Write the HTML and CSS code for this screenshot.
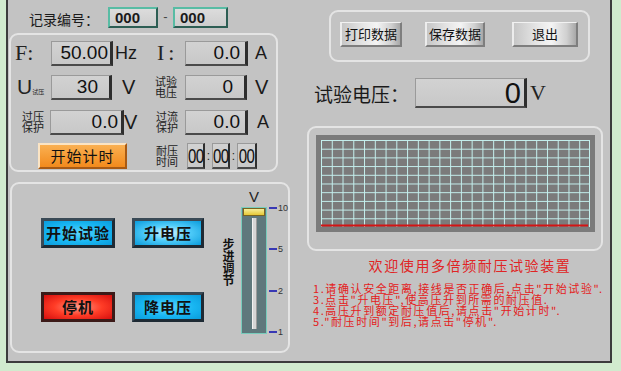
FILE: index.html
```html
<!DOCTYPE html>
<html>
    <head>
        <title>多倍频耐压试验装置</title>
        <meta charset="UTF-8">
        <link rel="stylesheet" href="styles.css">
    </head>
    <body>
        <div class="screen">
            <div class="left">
                <!-- Номер записи -->
                <div class="record">
                    <span class="record-label">记录编号：</span>
                    <span class="record-box record-box-1">000</span>
                    <span class="record-dash">-</span>
                    <span class="record-box record-box-2">000</span>
                </div>

                <!-- Измеряемые величины -->
                <div class="group group-meter">
                    <div class="row row-1">
                        <span class="sym sym-f">F:</span>
                        <span class="disp disp-f">50.00</span>
                        <span class="unit unit-hz">Hz</span>
                        <span class="sym sym-i">I:</span>
                        <span class="disp disp-i">0.0</span>
                        <span class="unit unit-a">A</span>
                    </div>
                    <div class="row row-2">
                        <span class="sym sym-u">U<small>试压</small></span>
                        <span class="disp disp-u">30</span>
                        <span class="unit unit-v1">V</span>
                        <span class="lbl lbl-2">试验<br>电压</span>
                        <span class="disp disp-tv">0</span>
                        <span class="unit unit-v2">V</span>
                    </div>
                    <div class="row row-3">
                        <span class="lbl lbl-ov">过压<br>保护</span>
                        <span class="disp disp-ov">0.0</span>
                        <span class="unit unit-v3">V</span>
                        <span class="lbl lbl-oc">过流<br>保护</span>
                        <span class="disp disp-oc">0.0</span>
                        <span class="unit unit-a2">A</span>
                    </div>
                    <div class="row row-4">
                        <button class="btn-orange">开始计时</button>
                        <span class="lbl lbl-time">耐压<br>时间</span>
                        <span class="disp disp-time t1"><span>00</span></span>
                        <span class="colon">:</span>
                        <span class="disp disp-time t2"><span>00</span></span>
                        <span class="colon">:</span>
                        <span class="disp disp-time t3"><span>00</span></span>
                    </div>
                </div>

                <!-- Управление -->
                <div class="group group-control">
                    <div class="ctrl-buttons">
                        <button class="btn-blue">开始试验</button>
                        <button class="btn-blue btn-glow">升电压</button>
                        <button class="btn-red">停机</button>
                        <button class="btn-blue">降电压</button>
                    </div>
                    <div class="vlabel">步进调节</div>
                    <div class="stepper">
                        <div class="stepper-v">V</div>
                        <div class="stepper-body">
                            <div class="slider">
                                <div class="slider-knob"></div>
                                <div class="slider-track"></div>
                            </div>
                            <div class="scale">
                                <span><i></i>10</span>
                                <span><i></i>5</span>
                                <span><i></i>2</span>
                                <span><i></i>1</span>
                            </div>
                        </div>
                    </div>
                </div>
            </div>

            <div class="right">
                <div class="group group-actions">
                    <button class="btn-gray btn-print">打印数据</button>
                    <button class="btn-gray btn-save">保存数据</button>
                    <button class="btn-gray btn-exit">退出</button>
                </div>

                <div class="volt-row">
                    <span class="volt-label">试验电压：</span>
                    <span class="disp disp-volt">0</span>
                    <span class="volt-unit">V</span>
                </div>

                <div class="group group-chart">
                    <div class="chart">
                        <svg width="269" height="87" viewBox="0 0 269 87">
                            <defs>
                                <pattern id="grid" width="10.76" height="8.7" patternUnits="userSpaceOnUse">
                                    <path d="M0.5 0 V8.7 M0 0.5 H10.76" stroke="#c4f0ee" stroke-width="1" fill="none"/>
                                </pattern>
                            </defs>
                            <rect x="0" y="0" width="269" height="87" fill="url(#grid)"/>
                            <path d="M268.5 0 V87" stroke="#c4f0ee" stroke-width="1"/>
                            <path d="M0 85.5 H267" stroke="#d41414" stroke-width="2"/>
                        </svg>
                    </div>
                </div>

                <div class="welcome">欢迎使用多倍频耐压试验装置</div>
                <div class="notes">
                    1.请确认安全距离,接线是否正确后,点击"开始试验".<br>
                    3.点击"升电压",使高压升到所需的耐压值.<br>
                    4.高压升到额定耐压值后,请点击"开始计时".<br>
                    5."耐压时间"到后,请点击"停机".
                </div>
            </div>
        </div>
    </body>
</html>
```

FILE: styles.css
```css
* {
    box-sizing: border-box;
}

body {
    margin: 0;
    background: #d1ebce;
    font-family: "Noto Sans CJK SC", sans-serif;
    color: #1a1a1a;
}

button {
    font-family: "Noto Sans CJK SC", sans-serif;
    padding: 0;
    cursor: pointer;
    color: #111;
}

.screen {
    display: flex;
    margin-left: 6px;
    width: 606px;
    height: 363px;
    background: #c3c3c3;
    border-left: 2px solid #3c3c3c;
    border-right: 2px solid #3c3c3c;
    border-bottom: 2px solid #3c3c3c;
}

.left {
    width: 284px;
    flex: none;
}

.right {
    flex: 1;
}

.group {
    border: 2px solid #e4e4e4;
    border-radius: 9px;
}

/* record number */
.record {
    display: flex;
    align-items: flex-start;
    height: 33px;
    padding-left: 21px;
}

.record-label {
    width: 79px;
    margin-top: 9px;
    font-size: 14px;
    line-height: 20px;
}

.record-box {
    height: 21px;
    margin-top: 7px;
    padding-left: 5px;
    background: linear-gradient(#dcdcdc, #cdcdcd);
    border-left: 2px solid #58bca4;
    border-top: 2px solid #58bca4;
    border-right: 2px solid #2d5e54;
    border-bottom: 2px solid #2d5e54;
    font-family: "Liberation Sans", sans-serif;
    font-weight: bold;
    font-size: 15px;
    line-height: 17px;
}

.record-box-1 {
    width: 50px;
}

.record-box-2 {
    width: 55px;
}

.record-dash {
    width: 15px;
    margin-top: 9px;
    text-align: center;
    font-family: "Liberation Sans", sans-serif;
    font-size: 13px;
    color: #444;
}

/* meter group */
.group-meter {
    width: 269px;
    height: 139px;
    margin-left: 1px;
    padding-top: 5px;
}

.row {
    display: flex;
    align-items: center;
    height: 26px;
}

.row-2,
.row-4 {
    margin-top: 8px;
}

.row-3 {
    margin-top: 9px;
}

.sym {
    font-family: "Liberation Serif", serif;
    font-size: 22px;
    line-height: 26px;
    color: #222;
}

.sym-f {
    width: 40px;
    padding-left: 4px;
}

.sym-i {
    width: 30px;
    padding-left: 2px;
    letter-spacing: 4px;
}

.sym-u {
    width: 40px;
    padding-left: 6px;
    font-family: "Liberation Sans", sans-serif;
    font-size: 21px;
}

.sym-u small {
    font-family: "Noto Sans CJK SC", sans-serif;
    font-size: 6px;
    line-height: 6px;
}

.disp {
    height: 25px;
    background: linear-gradient(#d2d2d2, #c8c8c8);
    border-top: 1px solid #9a9a9a;
    border-left: 1px solid #9a9a9a;
    border-right: 3px solid #2e2e2e;
    border-bottom: 2px solid #4a4a4a;
    text-align: right;
    font-family: "Liberation Sans", sans-serif;
    font-size: 19px;
    line-height: 22px;
    color: #111;
}

.disp-f {
    width: 62px;
    padding-right: 2px;
}

.disp-i {
    width: 63px;
    padding-right: 5px;
}

.disp-u {
    width: 61px;
    padding-right: 11px;
}

.disp-tv {
    width: 62px;
    padding-right: 11px;
}

.disp-ov {
    width: 74px;
    padding-right: 3px;
}

.disp-oc {
    width: 63px;
    padding-right: 5px;
}

.unit {
    font-family: "Liberation Sans", sans-serif;
    font-size: 20px;
    color: #1a1a1a;
}

.unit-hz {
    width: 42px;
    padding-left: 2px;
    font-size: 18px;
}

.unit-a {
    padding-left: 7px;
    font-size: 18px;
}

.unit-v1 {
    width: 43px;
    padding-left: 10px;
}

.unit-v2 {
    padding-left: 8px;
}

.unit-v3 {
    width: 31px;
}

.unit-a2 {
    padding-left: 9px;
    font-size: 18px;
}

.lbl {
    font-size: 11px;
    line-height: 11px;
    color: #222;
}

.lbl-2 {
    width: 30px;
}

.lbl-ov {
    width: 39px;
    padding-left: 11px;
}

.lbl-oc {
    width: 30px;
    padding-left: 1px;
}

.lbl-time {
    width: 31px;
    margin-left: 29px;
}

.btn-orange {
    width: 89px;
    height: 26px;
    margin-left: 27px;
    background: linear-gradient(#fab052, #f28a1c);
    border-top: 2px solid #fbe4c4;
    border-left: 2px solid #fbe4c4;
    border-right: 2px solid #a85a14;
    border-bottom: 2px solid #a85a14;
    font-size: 15px;
    letter-spacing: 1px;
    line-height: 20px;
}

.disp-time {
    height: 26px;
    padding: 0;
    text-align: center;
    border-right-width: 2px;
    font-size: 15px;
    letter-spacing: -0.5px;
    line-height: 23px;
}

.disp-time span {
    display: inline-block;
    transform: scaleY(1.3);
}

.t1,
.t2 {
    width: 18px;
}

.t3 {
    width: 20px;
}

.colon {
    width: 7px;
    text-align: center;
    font-family: "Liberation Sans", sans-serif;
    font-size: 12px;
    color: #222;
}

/* control group */
.group-control {
    display: flex;
    align-items: flex-start;
    width: 280px;
    height: 171px;
    margin-top: 10px;
    margin-left: 2px;
}

.ctrl-buttons {
    display: grid;
    grid-template-columns: 74px 72px;
    grid-template-rows: 30px 30px;
    column-gap: 17px;
    row-gap: 44px;
    margin-top: 34px;
    margin-left: 29px;
}

.btn-blue,
.btn-red {
    border: 3px solid #1e2a34;
    border-top-color: #3a4a56;
    border-left-color: #3a4a56;
    font-size: 15px;
    font-weight: bold;
    letter-spacing: 1px;
    line-height: 20px;
}

.btn-blue {
    background: radial-gradient(ellipse at center, #58d4fc 0%, #18b6f2 55%, #0a9cdc 100%);
}

.btn-glow {
    background: radial-gradient(ellipse at center, #d8f6ff 0%, #52cdfa 45%, #0a9cdc 100%);
}

.btn-red {
    background: radial-gradient(ellipse at center, #ff9a88 0%, #ff3c26 50%, #d60e0e 100%);
    border-color: #3c1a18;
}

.vlabel {
    width: 12px;
    margin-top: 54px;
    margin-left: 18px;
    writing-mode: vertical-rl;
    font-size: 12px;
    font-weight: bold;
    line-height: 12px;
    color: #111;
}

.stepper {
    margin-top: 4px;
    margin-left: 7px;
}

.stepper-v {
    width: 26px;
    text-align: center;
    font-family: "Liberation Sans", sans-serif;
    font-size: 15px;
    line-height: 17px;
    color: #222;
}

.stepper-body {
    display: flex;
    align-items: flex-start;
    margin-top: 2px;
}

.slider {
    display: flex;
    flex-direction: column;
    align-items: center;
    width: 26px;
    height: 127px;
    padding: 0 1px;
    background: #5f787c;
    border: 1px solid #78ccbc;
}

.slider-knob {
    width: 100%;
    height: 8px;
    background: linear-gradient(#f6ee9a, #e6c836);
    border: 1px solid #7a6420;
}

.slider-track {
    width: 5px;
    height: 111px;
    margin-top: 2px;
    background: #d6d6d6;
    border-left: 1px solid #f2f2f2;
    border-right: 1px solid #9c9c9c;
}

.scale {
    display: flex;
    flex-direction: column;
    justify-content: space-between;
    height: 136px;
    margin-top: -5px;
    margin-left: 2px;
}

.scale span {
    display: flex;
    align-items: center;
    height: 12px;
    font-family: "Liberation Sans", sans-serif;
    font-size: 9px;
    color: #333;
}

.scale i {
    width: 8px;
    height: 2px;
    margin-right: 1px;
    background: #3838b4;
}

/* right side */
.group-actions {
    display: flex;
    width: 261px;
    height: 52px;
    margin-top: 10px;
    margin-left: 37px;
    padding-top: 10px;
    padding-left: 9px;
}

.btn-gray {
    height: 25px;
    background: linear-gradient(to right, #c6c6c6 0%, #e4e4e4 35%, #f4f4f4 60%, #d0d0d0 85%, #a8a8a8 100%);
    border-top: 1px solid #f2f2f2;
    border-left: 2px solid #ececec;
    border-right: 2px solid #7e7e7e;
    border-bottom: 2px solid #7e7e7e;
    font-size: 13px;
    line-height: 18px;
}

.btn-print {
    width: 62px;
}

.btn-save {
    width: 60px;
    margin-left: 23px;
}

.btn-exit {
    width: 66px;
    margin-left: 27px;
}

.volt-row {
    display: flex;
    align-items: center;
    height: 30px;
    margin-top: 16px;
    margin-left: 22px;
}

.volt-label {
    width: 101px;
    font-size: 19px;
    color: #1a1a1a;
}

.disp-volt {
    width: 112px;
    height: 30px;
    padding-right: 3px;
    font-size: 29px;
    line-height: 28px;
}

.volt-unit {
    margin-left: 3px;
    font-family: "Liberation Serif", serif;
    font-size: 22px;
    color: #222;
}

.group-chart {
    width: 296px;
    height: 125px;
    margin-top: 18px;
    margin-left: 15px;
    padding-top: 7px;
    padding-left: 7px;
}

.chart {
    width: 279px;
    height: 97px;
    padding: 5px;
    background: #7b7b7b;
}

.chart svg {
    display: block;
}

.welcome {
    margin-top: 6px;
    padding-left: 38px;
    text-align: center;
    font-size: 14px;
    line-height: 16px;
    letter-spacing: 1.6px;
    color: #e02424;
}

.notes {
    margin-top: 10px;
    padding-left: 21px;
    font-size: 11px;
    line-height: 11px;
    letter-spacing: 1.6px;
    color: #e42020;
    white-space: nowrap;
}
```
